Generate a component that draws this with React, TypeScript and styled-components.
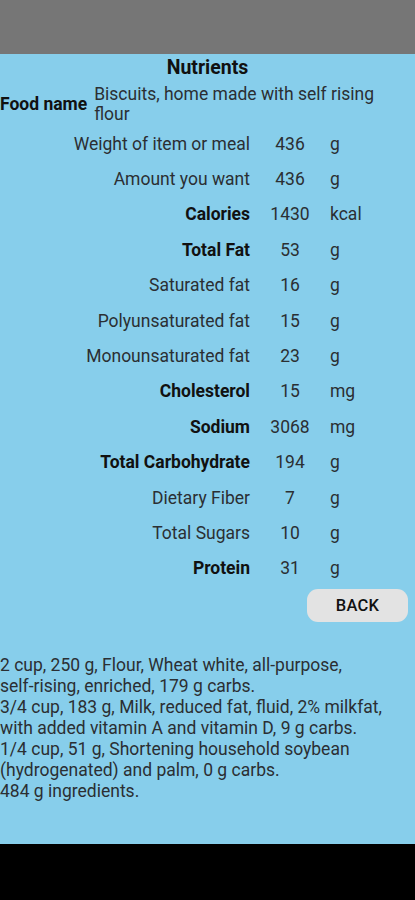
import styled, { createGlobalStyle } from "styled-components";

const GlobalStyle = createGlobalStyle`
  *, *::before, *::after { box-sizing: border-box; }
  html, body { margin: 0; padding: 0; }
  body {
    font-family: Roboto, "Liberation Sans", Arial, sans-serif;
    background: #000;
  }
`;

const Screen = styled.div`
  width: 415px;
  height: 900px;
  display: flex;
  flex-direction: column;
  background: #000;
`;

const StatusBar = styled.div`
  height: 54px;
  background: #767676;
  flex-shrink: 0;
`;

const Content = styled.div`
  height: 790px;
  background: #87ceeb;
  display: flex;
  flex-direction: column;
`;

const Title = styled.h1`
  margin: 0;
  padding-top: 4px;
  height: 26px;
  text-align: center;
  font-size: 19.5px;
  line-height: 20px;
  font-weight: 700;
  color: #111;
`;

const FoodRow = styled.div`
  display: flex;
  align-items: center;
  gap: 7px;
  margin-top: 1px;
  min-height: 45px;
`;

const FoodLabel = styled.div`
  font-size: 17.5px;
  font-weight: 700;
  color: #111;
  white-space: nowrap;
  flex-shrink: 0;
`;

const FoodValue = styled.div`
  font-size: 17.5px;
  line-height: 20px;
  color: #2b2f33;
  padding-right: 10px;
`;

const Table = styled.div`
  display: grid;
  grid-template-columns: 250px 80px 1fr;
  grid-auto-rows: 35.4px;
`;

const Label = styled.div<{ $bold?: boolean }>`
  display: flex;
  align-items: center;
  justify-content: flex-end;
  font-size: 17.5px;
  font-weight: ${({ $bold }) => ($bold ? 700 : 400)};
  color: ${({ $bold }) => ($bold ? "#111" : "#2b2f33")};
  white-space: nowrap;
`;

const Value = styled.div`
  display: flex;
  align-items: center;
  justify-content: center;
  font-size: 17.5px;
  color: #2b2f33;
`;

const Unit = styled.div`
  display: flex;
  align-items: center;
  font-size: 17.5px;
  color: #2b2f33;
`;

const ButtonRow = styled.div`
  display: flex;
  justify-content: flex-end;
  padding-right: 7px;
  margin-top: 3px;
`;

const BackButton = styled.button`
  width: 101px;
  height: 33px;
  border: none;
  border-radius: 11px;
  background: #e3e3e3;
  font-family: inherit;
  font-size: 16.5px;
  font-weight: 500;
  color: #111;
  letter-spacing: 0.3px;
`;

const Recipe = styled.div`
  margin-top: 33px;
  width: 405px;
  font-size: 17.5px;
  line-height: 21px;
  color: #2b2f33;
`;

const NoBreak = styled.span`
  white-space: nowrap;
`;

const BottomBar = styled.div`
  flex: 1;
  background: #000;
`;

type Row = { label: string; value: string; unit: string; bold?: boolean };

const rows: Row[] = [
  { label: "Weight of item or meal", value: "436", unit: "g" },
  { label: "Amount you want", value: "436", unit: "g" },
  { label: "Calories", value: "1430", unit: "kcal", bold: true },
  { label: "Total Fat", value: "53", unit: "g", bold: true },
  { label: "Saturated fat", value: "16", unit: "g" },
  { label: "Polyunsaturated fat", value: "15", unit: "g" },
  { label: "Monounsaturated fat", value: "23", unit: "g" },
  { label: "Cholesterol", value: "15", unit: "mg", bold: true },
  { label: "Sodium", value: "3068", unit: "mg", bold: true },
  { label: "Total Carbohydrate", value: "194", unit: "g", bold: true },
  { label: "Dietary Fiber", value: "7", unit: "g" },
  { label: "Total Sugars", value: "10", unit: "g" },
  { label: "Protein", value: "31", unit: "g", bold: true },
];

// words with a hyphen are kept whole, as the app's text view does
const renderLine = (line: string) =>
  line.split(" ").map((word, i) => (
    <span key={i}>
      {i > 0 ? " " : ""}
      {word.includes("-") ? <NoBreak>{word}</NoBreak> : word}
    </span>
  ));

const ingredients = [
  "2 cup, 250 g, Flour, Wheat white, all-purpose, self-rising, enriched, 179 g carbs.",
  "3/4 cup, 183 g, Milk, reduced fat, fluid, 2% milkfat, with added vitamin A and vitamin D, 9 g carbs.",
  "1/4 cup, 51 g, Shortening household soybean (hydrogenated) and palm, 0 g carbs.",
  "484 g ingredients.",
];

export default function App() {
  return (
    <Screen>
      <GlobalStyle />
      <StatusBar />
      <Content>
        <Title>Nutrients</Title>
        <FoodRow>
          <FoodLabel>Food name</FoodLabel>
          <FoodValue>Biscuits, home made with self rising flour</FoodValue>
        </FoodRow>
        <Table>
          {rows.flatMap((r) => [
            <Label key={r.label + "l"} $bold={r.bold}>
              {r.label}
            </Label>,
            <Value key={r.label + "v"}>{r.value}</Value>,
            <Unit key={r.label + "u"}>{r.unit}</Unit>,
          ])}
        </Table>
        <ButtonRow>
          <BackButton>BACK</BackButton>
        </ButtonRow>
        <Recipe>
          {ingredients.map((line) => (
            <div key={line}>{renderLine(line)}</div>
          ))}
        </Recipe>
      </Content>
      <BottomBar />
    </Screen>
  );
}
